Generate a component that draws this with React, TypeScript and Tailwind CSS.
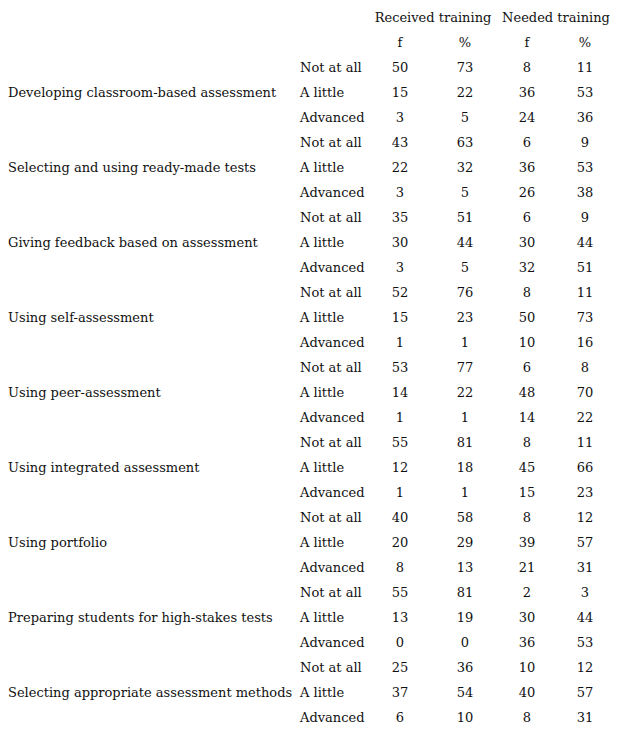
const groups: { label: string; rows: [string, number, number, number, number][] }[] = [
  {
    label: 'Developing classroom-based assessment',
    rows: [
      ['Not at all', 50, 73, 8, 11],
      ['A little', 15, 22, 36, 53],
      ['Advanced', 3, 5, 24, 36],
    ],
  },
  {
    label: 'Selecting and using ready-made tests',
    rows: [
      ['Not at all', 43, 63, 6, 9],
      ['A little', 22, 32, 36, 53],
      ['Advanced', 3, 5, 26, 38],
    ],
  },
  {
    label: 'Giving feedback based on assessment',
    rows: [
      ['Not at all', 35, 51, 6, 9],
      ['A little', 30, 44, 30, 44],
      ['Advanced', 3, 5, 32, 51],
    ],
  },
  {
    label: 'Using self-assessment',
    rows: [
      ['Not at all', 52, 76, 8, 11],
      ['A little', 15, 23, 50, 73],
      ['Advanced', 1, 1, 10, 16],
    ],
  },
  {
    label: 'Using peer-assessment',
    rows: [
      ['Not at all', 53, 77, 6, 8],
      ['A little', 14, 22, 48, 70],
      ['Advanced', 1, 1, 14, 22],
    ],
  },
  {
    label: 'Using integrated assessment',
    rows: [
      ['Not at all', 55, 81, 8, 11],
      ['A little', 12, 18, 45, 66],
      ['Advanced', 1, 1, 15, 23],
    ],
  },
  {
    label: 'Using portfolio',
    rows: [
      ['Not at all', 40, 58, 8, 12],
      ['A little', 20, 29, 39, 57],
      ['Advanced', 8, 13, 21, 31],
    ],
  },
  {
    label: 'Preparing students for high-stakes tests',
    rows: [
      ['Not at all', 55, 81, 2, 3],
      ['A little', 13, 19, 30, 44],
      ['Advanced', 0, 0, 36, 53],
    ],
  },
  {
    label: 'Selecting appropriate assessment methods',
    rows: [
      ['Not at all', 25, 36, 10, 12],
      ['A little', 37, 54, 40, 57],
      ['Advanced', 6, 10, 8, 31],
    ],
  },
];

export default function App() {
  return (
    <div className="w-[618px] h-[750px] bg-white text-[#111] pt-[5px] font-['DejaVu_Serif',serif] text-[13px]">
      <table className="border-collapse table-fixed w-[614px]">
        <colgroup>
          <col className="w-[292px]" />
          <col className="w-[76px]" />
          <col className="w-[64px]" />
          <col className="w-[66px]" />
          <col className="w-[58px]" />
          <col className="w-[58px]" />
        </colgroup>
        <thead>
          <tr className="h-[25px]">
            <th />
            <th />
            <th colSpan={2} className="font-normal text-center whitespace-nowrap">Received training</th>
            <th colSpan={2} className="font-normal text-center whitespace-nowrap">Needed training</th>
          </tr>
          <tr className="h-[25px]">
            <th />
            <th />
            <th className="font-normal text-center">f</th>
            <th className="font-normal text-center">%</th>
            <th className="font-normal text-center">f</th>
            <th className="font-normal text-center">%</th>
          </tr>
        </thead>
        <tbody>
          {groups.map((g) =>
            g.rows.map((r, i) => (
              <tr key={g.label + r[0]} className="h-[25px]">
                {i === 0 && (
                  <td rowSpan={3} className="pl-2 align-middle whitespace-nowrap">
                    {g.label}
                  </td>
                )}
                <td className="pl-2 whitespace-nowrap">{r[0]}</td>
                <td className="text-center">{r[1]}</td>
                <td className="text-center">{r[2]}</td>
                <td className="text-center">{r[3]}</td>
                <td className="text-center">{r[4]}</td>
              </tr>
            ))
          )}
        </tbody>
      </table>
    </div>
  );
}
